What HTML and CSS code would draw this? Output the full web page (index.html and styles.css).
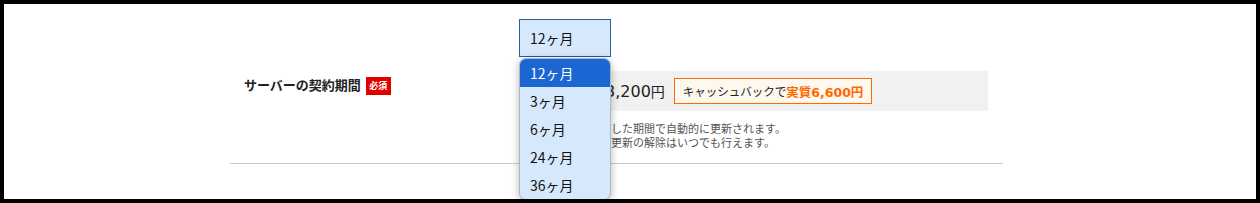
FILE: index.html
```html
<!DOCTYPE html>
<html lang="ja">
<head>
<meta charset="utf-8">
<link rel="stylesheet" href="styles.css">
</head>
<body>
<div class="frame">
  <div class="wrap">
    <div class="row">
      <div class="label-col">
        <span class="label">サーバーの契約期間</span>
        <span class="badge">必須</span>
      </div>
      <div class="field-col">
        <div class="select-wrap">
          <div class="select">12ヶ月</div>
          <ul class="dropdown">
            <li class="opt active">12ヶ月</li>
            <li class="opt">3ヶ月</li>
            <li class="opt">6ヶ月</li>
            <li class="opt">24ヶ月</li>
            <li class="opt">36ヶ月</li>
          </ul>
        </div>
        <div class="price-row">
          <span class="price">3,200<span class="yen">円</span></span>
          <span class="cashback">キャッシュバックで<strong>実質6,600円</strong></span>
        </div>
        <div class="notes">
          <p>※満了後は、選択した期間で自動的に更新されます。</p>
          <p>※契約期間の自動更新の解除はいつでも行えます。</p>
        </div>
      </div>
    </div>
    <div class="divider"></div>
  </div>
</div>
</body>
</html>
```
FILE: styles.css
```css
* { box-sizing: border-box; }
html, body { margin: 0; padding: 0; background: #000; }
body {
  font-family: "DejaVu Sans", "Noto Sans CJK JP", sans-serif;
  color: #222;
}
.frame {
  width: 1260px;
  height: 203px;
  border: 4px solid #000;
  background: #fff;
  overflow: hidden;
}
.wrap {
  margin-left: 226px;
  width: 773px;
}
.row {
  display: grid;
  grid-template-columns: 289px 1fr;
}
.label-col {
  padding-left: 14px;
  padding-top: 70px;
  display: flex;
  align-items: center;
  gap: 5px;
  height: 92px;
  align-self: start;
}
.label {
  font-family: "Noto Sans CJK JP", sans-serif;
  font-weight: 700;
  font-size: 13px;
  color: #222;
  line-height: 18px;
}
.badge {
  display: inline-flex;
  align-items: center;
  justify-content: center;
  width: 25px;
  height: 18px;
  background: #e00000;
  color: #fff;
  font-family: "Noto Sans CJK JP", sans-serif;
  font-weight: 700;
  font-size: 9px;
  margin-top: 1px;
}
.field-col {
  padding-top: 15px;
}
.select-wrap {
  position: relative;
  width: 92px;
}
.select {
  height: 38px;
  border: 1px solid #2b5d9e;
  background: #d6e9fc;
  padding-left: 10px;
  display: flex;
  align-items: center;
  font-family: "Noto Sans CJK JP", sans-serif;
  font-size: 14px;
  color: #111;
}
.dropdown {
  position: absolute;
  top: 39px;
  left: 0;
  width: 92px;
  margin: 0;
  padding: 0;
  list-style: none;
  background: #d6e9fc;
  border: 1px solid #b0b6bf;
  border-radius: 7px;
  overflow: hidden;
  box-shadow: 0 2px 8px rgba(0,0,0,0.28);
  z-index: 10;
}
.opt {
  height: 28px;
  display: flex;
  align-items: center;
  padding-left: 10px;
  font-family: "Noto Sans CJK JP", sans-serif;
  font-size: 14px;
  color: #111;
}
.opt.active {
  background: #1a66d3;
  color: #fff;
}
.price-row {
  margin-top: 14px;
  margin-right: 15px;
  height: 40px;
  background: #f1f1f1;
  display: flex;
  align-items: center;
  padding-left: 86px;
}
.price {
  font-size: 16px;
  color: #222;
}
.yen {
  font-family: "Noto Sans CJK JP", sans-serif;
  font-size: 14px;
}
.cashback {
  margin-left: 9px;
  height: 26px;
  border: 1px solid #ff6a00;
  background: #fff8ef;
  display: inline-flex;
  align-items: center;
  padding: 0 8px 0 8px;
  font-family: "Noto Sans CJK JP", sans-serif;
  font-size: 11.5px;
  color: #222;
}
.cashback strong {
  font-family: "DejaVu Sans", "Noto Sans CJK JP", sans-serif;
  font-size: 12.5px;
  font-weight: 700;
  color: #ff6a00;
}
.notes {
  margin-top: 10px;
  margin-left: 4px;
  font-family: "Noto Sans CJK JP", sans-serif;
  font-size: 11px;
  line-height: 14px;
  color: #555;
}
.notes p { margin: 0; }
.divider {
  margin-top: 14px;
  height: 1px;
  background: #cccccc;
}
```
